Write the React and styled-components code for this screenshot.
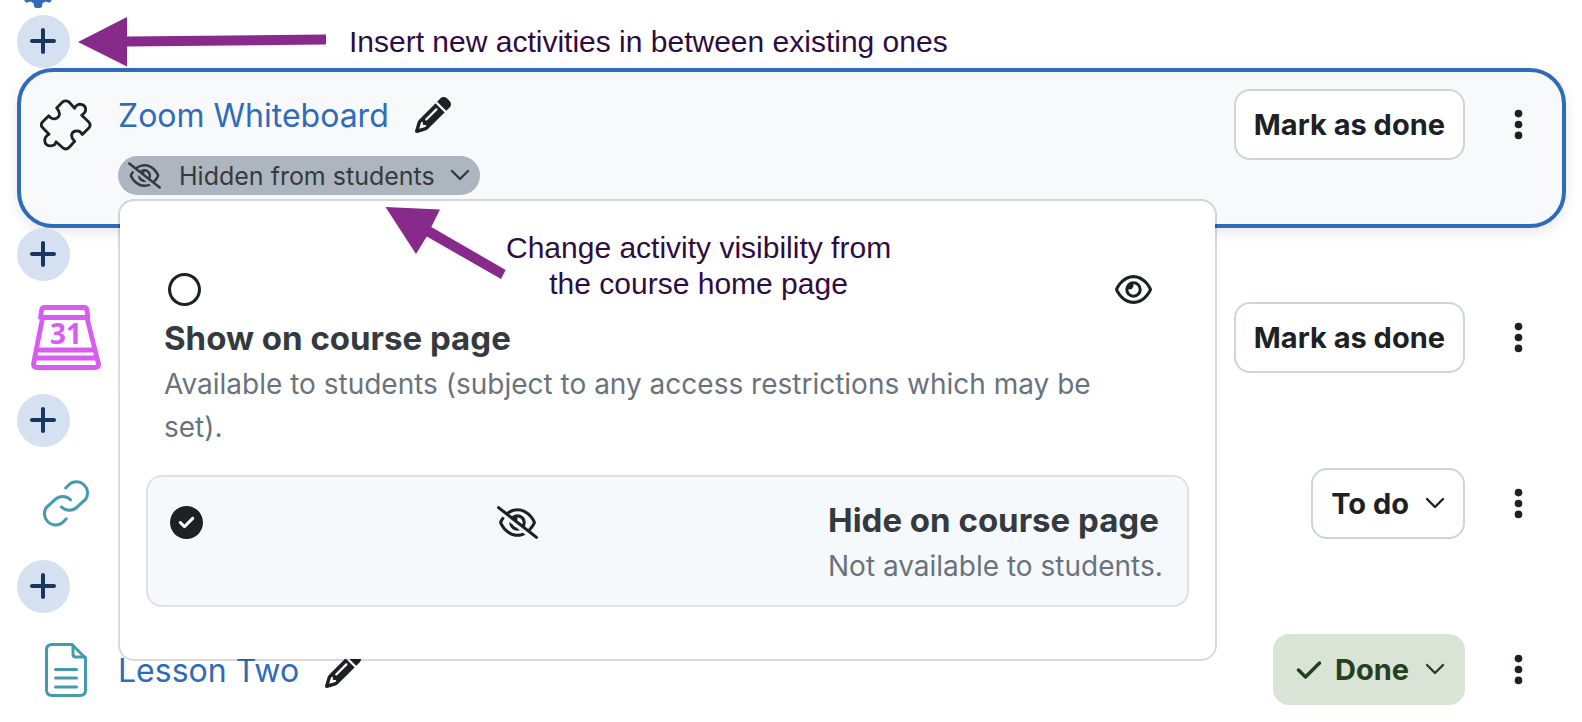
import styled, { createGlobalStyle } from 'styled-components';
import {
    FaCheck,
    FaCircleCheck,
    FaEllipsisVertical,
    FaGear,
    FaPencil,
    FaPlus,
    FaRegCircle,
    FaRegEye,
    FaRegEyeSlash,
} from 'react-icons/fa6';

const PuzzleIcon = () => (
    <svg width="52" height="52" viewBox="0 0 52 52" fill="none" stroke="#1d2125" strokeWidth="2.8" strokeLinejoin="round">
        <path d="M22.500 3Q25.700 0.800 29 3L34.700 9.300C35 7 38 5 41 5.300C46 6 48 12.500 41.700 16.200L48.500 22.800Q51.500 26 49 28.800L42.300 35.500C41 33 38.500 31.500 36 32C31.500 32.500 29.500 37.500 34.700 42.300L29 48.500Q25.700 51.500 22.500 48.500L16 42.800C15.500 45.500 13 47 10 46.800C4 46.500 2.500 39 9 35.300L2.500 28.500Q0 26 2.500 23L8.800 16.700C10 19 13 20.300 15.500 19.600C20 18.500 21 13.500 16.700 9Z" />
    </svg>
);

const CalendarIcon = () => (
    <svg width="70" height="66" viewBox="0 0 70 66" fill="none" stroke="#d95bf0" strokeWidth="4.8" strokeLinejoin="round">
        <path d="M13 2.500H53Q56 2.500 56 6L57 12.500H9.500L10.500 6Q10.500 2.500 13 2.500Z" />
        <path d="M11.500 13L2.500 59Q2.500 62.500 6 62.500H64Q68 62.500 67.500 59L56 13" />
        <path d="M7 45H63M5 53H65" />
    </svg>
);

const LinkIcon = () => (
    <svg width="50" height="50" viewBox="0 0 50 50" fill="none" stroke="#449bab" strokeWidth="3" strokeLinecap="round">
        <path d="M24.700 9L29 4.800A11.200 11.200 0 0 1 44.700 20.200L36 28.200A11 11 0 0 1 20.500 28" />
        <path d="M25.300 39.800L21 44A11.200 11.200 0 0 1 5.300 28.600L14 20.600A11 11 0 0 1 29.500 20.800" />
    </svg>
);

const FileIcon = () => (
    <svg width="42" height="54" viewBox="0 0 42 54" fill="none" stroke="#449bab" strokeWidth="3" strokeLinecap="round" strokeLinejoin="round">
        <path d="M7 1.500H27L40.500 15V47Q40.500 52.500 35 52.500H7Q1.500 52.500 1.500 47V7Q1.500 1.500 7 1.500Z" />
        <path d="M28 2V11Q28 14 31 14H40M10.500 26.500H31.500M10.500 35H31.500M10.500 44H31.500" />
    </svg>
);

const ChevronIcon = () => (
    <Chevron width="20" height="12" viewBox="0 0 20 12">
        <path d="M2 2L10 10L18 2" />
    </Chevron>
);

const InsertActivity = ({ children }) => (
    <InsertRow>
        <InsertButton aria-label="Insert an activity">
            <FaPlus />
        </InsertButton>
        {children}
    </InsertRow>
);

const Activity = ({ icon, name, selected, action, children }) => (
    <ActivityItem $selected={selected}>
        <ActivityIcon>{icon}</ActivityIcon>
        <ActivityInfo>
            {name && (
                <ActivityName>
                    <NameLink href="#">{name}</NameLink>
                    <EditButton aria-label="Edit title">
                        <FaPencil />
                    </EditButton>
                </ActivityName>
            )}
            {children}
        </ActivityInfo>
        {action}
        <MoreButton aria-label="More">
            <FaEllipsisVertical />
        </MoreButton>
    </ActivityItem>
);

const Option = ({ id, title, text, icon, checked }) => (
    <OptionBox $checked={checked}>
        <RadioBox>
            <Radio id={id} name="visibility" defaultChecked={checked} />
            {checked ? <FaCircleCheck /> : <FaRegCircle />}
        </RadioBox>
        <OptionIcon>{icon}</OptionIcon>
        <OptionLabel htmlFor={id}>
            <OptionTitle>{title}</OptionTitle>
            <OptionText>{text}</OptionText>
        </OptionLabel>
    </OptionBox>
);

const App = () => {
    return (
        <Page>
            <GlobalStyle />
            <PreviousRow>
                <FaGear />
            </PreviousRow>

            <InsertActivity>
                <InsertArrow width="249" height="52" viewBox="0 0 249 52">
                    <path d="M0 26L49 1V20.500L248 18.500V28.500L49 30.500V50.500Z" fill="#882a8c" />
                </InsertArrow>
                <Note>Insert new activities in between existing ones</Note>
            </InsertActivity>

            <Activity
                selected
                icon={<PuzzleIcon />}
                name="Zoom Whiteboard"
                action={<StatusButton>Mark as done</StatusButton>}
            >
                <Visibility>
                    <Badge aria-expanded="true">
                        <FaRegEyeSlash size={33} />
                        <BadgeText>Hidden from students</BadgeText>
                        <ChevronIcon />
                    </Badge>
                    <Menu>
                        <Option
                            id="show"
                            title="Show on course page"
                            text="Available to students (subject to any access restrictions which may be set)."
                            icon={<FaRegEye size={37} />}
                        />
                        <Option
                            id="hide"
                            title="Hide on course page"
                            text="Not available to students."
                            icon={<FaRegEyeSlash size={41} />}
                            checked
                        />
                        <MenuNote>
                            <svg width="122" height="76" viewBox="0 0 122 76">
                                <path d="M1.500 1L56 3.600L47.300 21L121.700 64L117 73L42.800 30.500L32 48Z" fill="#882a8c" />
                            </svg>
                            <MenuNoteText>
                                Change activity visibility from
                                <br />
                                the course home page
                            </MenuNoteText>
                        </MenuNote>
                    </Menu>
                </Visibility>
            </Activity>

            <InsertActivity />
            <Activity
                icon={
                    <CalendarBox>
                        <CalendarIcon />
                        <CalendarDay>31</CalendarDay>
                    </CalendarBox>
                }
                action={<StatusButton>Mark as done</StatusButton>}
            />

            <InsertActivity />
            <Activity
                icon={<LinkIcon />}
                action={
                    <StatusButton>
                        To do
                        <ChevronIcon />
                    </StatusButton>
                }
            />

            <InsertActivity />
            <Activity
                icon={<FileIcon />}
                name="Lesson Two"
                action={
                    <StatusButton $done>
                        <DoneLabel>
                            <FaCheck size={28} />
                            Done
                        </DoneLabel>
                        <ChevronIcon />
                    </StatusButton>
                }
            />
        </Page>
    );
};

const GlobalStyle = createGlobalStyle`
    * {
        box-sizing: border-box;
    }
    body {
        margin: 0;
        background-color: #ffffff;
        color: #1d2125;
        font-family: Inter, "Liberation Sans", sans-serif;
    }
    button {
        padding: 0;
        border: 0;
        background: none;
        color: inherit;
        font: inherit;
        cursor: pointer;
    }
    svg {
        display: block;
        flex-shrink: 0;
    }
`;

const Page = styled.main`
    padding: 0 16px 17px 17px;
    overflow: hidden;
`;

const PreviousRow = styled.div`
    display: flex;
    align-items: flex-end;
    height: 15px;
    padding: 0 0 7px 5px;
    color: #306bba;
    font-size: 32px;
`;

const InsertRow = styled.div`
    display: flex;
    align-items: center;
    height: 53px;
`;
const InsertButton = styled.button`
    display: flex;
    align-items: center;
    justify-content: center;
    width: 53px;
    height: 53px;
    padding: 0 1px 1px 0;
    border-radius: 50%;
    background-color: #d5e1f0;
    color: #18365f;
    font-size: 32px;
`;
const InsertArrow = styled.svg`
    margin: 0 22px 0 8px;
`;
const Note = styled.p`
    margin: 0;
    color: #2f0c42;
    font-family: "Liberation Sans", sans-serif;
    font-size: 30px;
    line-height: 36px;
`;

const Chevron = styled.svg`
    margin-bottom: 2px;
    fill: none;
    stroke: currentColor;
    stroke-width: 2.4;
    stroke-linecap: round;
    stroke-linejoin: round;
`;

const ActivityItem = styled.section`
    display: flex;
    align-items: flex-start;
    padding: ${({ $selected }) => ($selected ? '17px 22px 29px 0' : '17px 22px 17px 0')};
    border: 4px solid ${({ $selected }) => ($selected ? '#306bba' : 'transparent')};
    border-radius: 36px;
    background-color: ${({ $selected }) => ($selected ? '#f8f9fb' : 'transparent')};
    box-shadow: ${({ $selected }) => ($selected ? '0 4px 14px rgba(0, 0, 0, 0.1)' : 'none')};
`;
const ActivityIcon = styled.div`
    display: flex;
    align-items: center;
    justify-content: center;
    width: 90px;
    height: 71px;
    margin-right: 7px;
`;
const ActivityInfo = styled.div`
    display: flex;
    flex: 1;
    flex-direction: column;
    justify-content: center;
    gap: 15px;
    min-height: 71px;
`;
const ActivityName = styled.div`
    display: flex;
    align-items: center;
    gap: 26px;
    height: 52px;
`;
const NameLink = styled.a`
    padding-top: 2px;
    color: #306bba;
    font-size: 32px;
    line-height: 52px;
    text-decoration: none;
`;
const EditButton = styled.button`
    font-size: 36px;
`;
const MoreButton = styled.button`
    display: flex;
    align-items: center;
    justify-content: center;
    width: 44px;
    height: 71px;
    margin-left: 31px;
    font-size: 35px;
`;
const StatusButton = styled.button`
    display: flex;
    align-items: center;
    gap: 16px;
    height: 71px;
    padding: 0 18px;
    border: 2px solid ${({ $done }) => ($done ? '#d9e3d6' : '#ced4da')};
    border-radius: 16px;
    background-color: ${({ $done }) => ($done ? '#d9e3d6' : '#ffffff')};
    color: ${({ $done }) => ($done ? '#263f1f' : '#1d2125')};
    font-size: 29px;
    font-weight: 700;
`;
const DoneLabel = styled.span`
    display: flex;
    align-items: center;
    gap: 12px;
    padding-left: 2px;
`;

const CalendarBox = styled.div`
    position: relative;
`;
const CalendarDay = styled.span`
    position: absolute;
    inset: 14px 0 auto;
    color: #d95bf0;
    font-family: "Noto Sans", sans-serif;
    font-size: 28px;
    font-weight: 700;
    line-height: 28px;
    text-align: center;
`;

const Visibility = styled.div`
    position: relative;
`;
const Badge = styled.button`
    display: flex;
    align-items: center;
    height: 39px;
    padding: 0 10px;
    border-radius: 20px;
    background-color: #adb5bf;
    color: #343a40;
`;
const BadgeText = styled.span`
    margin: 0 15px 0 18px;
    font-size: 25px;
`;

const Menu = styled.div`
    position: absolute;
    z-index: 1;
    top: 43px;
    left: 0;
    width: 1099px;
    padding: 43px 26px 52px;
    border: 2px solid rgba(0, 0, 0, 0.15);
    border-radius: 16px;
    background-color: #ffffff;
    background-clip: padding-box;
`;
const OptionBox = styled.div`
    display: flex;
    flex-wrap: wrap;
    justify-content: space-between;
    padding: 18px 18px 17px;
    border: ${({ $checked }) => ($checked ? '2px solid #dee2e6' : '0')};
    border-radius: 16px;
    background-color: ${({ $checked }) => ($checked ? '#f5f9fc' : 'transparent')};

    & + & {
        margin-top: 9px;
    }
`;
const RadioBox = styled.div`
    position: relative;
    display: flex;
    align-items: center;
    justify-content: center;
    width: 40px;
    height: 51px;
    padding-top: 3px;
    font-size: 33px;
`;
const Radio = styled.input.attrs({ type: 'radio' })`
    position: absolute;
    inset: 0;
    margin: 0;
    opacity: 0;
    cursor: pointer;
`;
const OptionIcon = styled.div`
    display: flex;
    align-items: center;
    justify-content: center;
    width: 76px;
    height: 51px;
    padding-top: 3px;
`;
const OptionLabel = styled.label`
    min-width: 341px;
    max-width: 960px;
    color: #6a737b;
    cursor: pointer;
`;
const OptionTitle = styled.span`
    display: block;
    color: #343a40;
    font-size: 33px;
    font-weight: 700;
    line-height: 50px;
`;
const OptionText = styled.span`
    display: block;
    font-size: 28px;
    line-height: 43px;
`;
const MenuNote = styled.div`
    position: absolute;
    top: 5px;
    left: 264px;
    display: flex;
`;
const MenuNoteText = styled(Note)`
    margin-top: 24px;
    text-align: center;
`;

export default App;
